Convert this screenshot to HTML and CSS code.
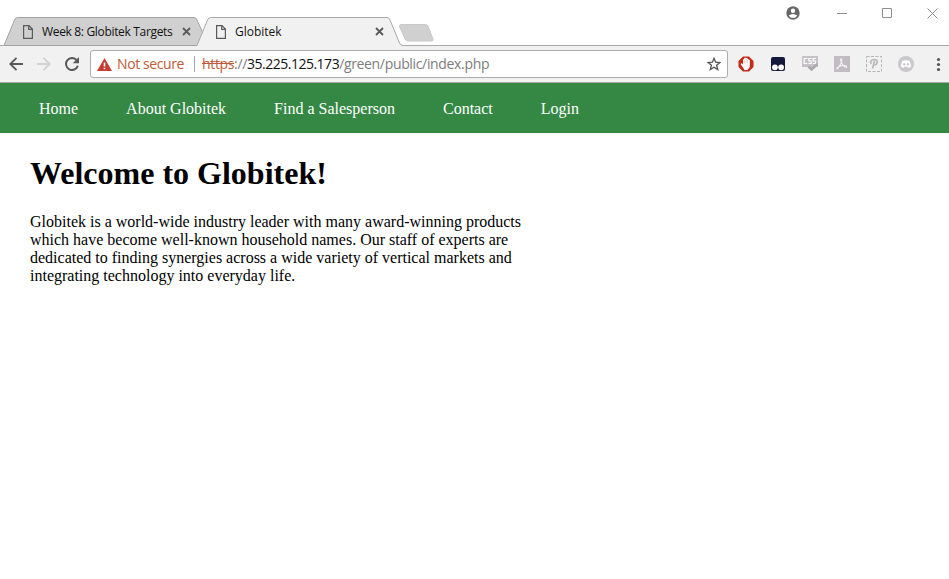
FILE: index.html
```
<!DOCTYPE html>
<html lang="en">
<head>
<meta charset="utf-8">
<title>Globitek</title>
<link rel="stylesheet" href="styles.css">
</head>
<body>
<div class="browser">
  <header class="tabstrip">
    <div class="tab tab-back">
      <svg class="tab-shape" width="200" height="29" viewBox="0 0 200 29"><path d="M0 28.5L1 26L10.500 3Q11.500 .5 13.500 .5H190Q192 .5 193 3L199 16L194 28.5Z" fill="#d0d0d0" stroke="#a3a3a3"/></svg>
      <svg class="page-icon" width="10" height="14" viewBox="0 0 10 14"><path d="M.6.6H6L9.4 4V13.4H.6ZM5.7.6V4.4H9.4" fill="none" stroke="#5a5a5a" stroke-width="1.2"/></svg>
      <span class="tab-title week">Week 8: Globitek Targets</span>
      <svg class="tab-close" width="9" height="9" viewBox="0 0 9 9"><path d="M1 1L8 8M8 1L1 8" stroke="#5a5a5a" stroke-width="1.8"/></svg>
    </div>
    <div class="tab tab-front">
      <svg class="tab-shape" width="206" height="30" viewBox="0 0 206 30"><path d="M0 30V28.5L1 26L10.500 3Q11.500 .5 13.500 .5H190Q192 .5 193 3L202.500 26Q203.500 28.5 206 28.5V30Z" fill="#f1f1f1"/><path d="M0 28.5L1 26L10.500 3Q11.500 .5 13.500 .5H190Q192 .5 193 3L202.500 26Q203.500 28.5 206 28.5" fill="none" stroke="#a8a8a8"/></svg>
      <svg class="page-icon" width="10" height="14" viewBox="0 0 10 14"><path d="M.6.6H6L9.4 4V13.4H.6ZM5.7.6V4.4H9.4" fill="none" stroke="#5a5a5a" stroke-width="1.2"/></svg>
      <span class="tab-title">Globitek</span>
      <svg class="tab-close" width="9" height="9" viewBox="0 0 9 9"><path d="M1 1L8 8M8 1L1 8" stroke="#5a5a5a" stroke-width="1.8"/></svg>
    </div>
    <svg class="new-tab" width="35" height="18" viewBox="0 0 35 18"><path d="M2 .5H26Q28 .5 29 2L34 15Q34.5 17 32.500 17H9Q7 17 6 15L.7 3Q0 .5 2 .5Z" fill="#d0d0d0" stroke="#cacaca"/></svg>
    <div class="window-controls">
      <svg width="14" height="14" viewBox="0 0 14 14"><circle cx="7" cy="7" r="6.700" fill="#666"/><circle cx="7" cy="4.700" r="2.200" fill="#fff"/><path d="M2.700 9.500Q7 6.500 11.300 9.500Q9.800 12 7 12T2.700 9.500Z" fill="#fff"/></svg>
      <svg width="10" height="11" viewBox="0 0 10 11"><path d="M0 5.500H10" stroke="#8e8e8e"/></svg>
      <svg width="10" height="10" viewBox="0 0 10 10"><path d="M.5.5H9.500V9.500H.5Z" fill="none" stroke="#8e8e8e"/></svg>
      <svg width="11" height="11" viewBox="0 0 11 11"><path d="M.5.5L10.500 10.500M10.500.5L.5 10.500" stroke="#8e8e8e"/></svg>
    </div>
  </header>
  <div class="toolbar">
    <div class="history">
      <svg width="14" height="14" viewBox="0 0 14 14"><path d="M14 7H1.500M7.500 .8L1.300 7L7.500 13.200" fill="none" stroke="#5a5a5a" stroke-width="1.900"/></svg>
      <svg width="14" height="14" viewBox="0 0 14 14"><path d="M0 7H12.500M6.500 .8L12.700 7L6.500 13.200" fill="none" stroke="#d2d2d2" stroke-width="1.900"/></svg>
      <svg width="14" height="14" viewBox="0 0 14 14"><path d="M11.700 3.200A6 6 0 1 0 12.800 8.700" fill="none" stroke="#5a5a5a" stroke-width="2"/><path d="M14 0V6.200H7.800Z" fill="#5a5a5a"/></svg>
    </div>
    <div class="omnibox">
      <svg class="warning" width="15" height="13" viewBox="0 0 15 13"><path d="M7.500 0L15 13H0Z" fill="#c53a31"/><path d="M6.700 4.500H8.300V8.500H6.700ZM6.700 9.700H8.300V11.300H6.700Z" fill="#fff"/></svg>
      <span class="security">Not secure</span>
      <span class="divider"></span>
      <span class="url"><s>https</s><i>://</i><b>35.225.125.173</b>/green/public/index.php</span>
      <svg class="star" width="14" height="14" viewBox="0 0 14 14"><path d="M7 1.300L8.600 5.200L12.900 5.500L9.600 8.200L10.700 12.500L7 10.200L3.300 12.500L4.400 8.200L1.100 5.500L5.400 5.200Z" fill="none" stroke="#555" stroke-width="1.300"/></svg>
    </div>
    <div class="extensions">
      <svg width="16" height="16" viewBox="0 0 16 16"><path d="M5 .5H11L15.500 5V11L11 15.500H5L.5 11V5Z" fill="#c22b1a"/><path d="M5 11.500L2.500 8L3.800 7.200L5 8.500V3.500L6.200 3.200V2L7.600 1.800L9 2L10.300 3.200L11.800 4V11L9.500 14H6.500Z" fill="#fff"/><path d="M6.500 4V7M8 3V7M9.500 4V7" stroke="#e6a8a0" stroke-width=".5"/></svg>
      <svg width="16" height="16" viewBox="0 0 16 16"><rect x="1" y="1" width="14" height="14" rx="2" fill="#14183a"/><circle cx="4.900" cy="11.300" r="2.900" fill="#fff"/><circle cx="11.100" cy="11.300" r="2.900" fill="#fff"/></svg>
      <svg width="16" height="16" viewBox="0 0 16 16"><path d="M0 0H16V11H12L10 14L7 11H0Z" fill="#c5c1c6"/><path d="M5.300 2.500H2.200V7.500H5.300M9.700 2.500H6.900V5H9.200V7.500H6.400M14 2.500H11.200V5H13.500V7.500H10.700" fill="none" stroke="#fff" stroke-width="1.200"/><path d="M6.500 10.500L9.500 13.500L15.500 8" fill="none" stroke="#aaa" stroke-width="2.500"/></svg>
      <svg width="16" height="16" viewBox="0 0 16 16"><path d="M0 0H16V16H0Z" fill="#c1bcc3"/><path d="M7.200 2.800C9 3 7.500 8.500 3.300 12.800C2 12.500 4 10.500 7.500 9.700S13 10 12.500 11.200S9 10 7.500 6.800S6.500 2.800 7.200 2.800" fill="none" stroke="#f1f1f1" stroke-width="1.100"/></svg>
      <svg width="16" height="16" viewBox="0 0 16 16"><path d="M.5.5H15.500V15.500H.5Z" fill="none" stroke="#b5b5b5" stroke-dasharray="3 1.500"/><path d="M5 8Q3.500 4 8 3.500Q12 3.500 11 7Q9.500 10 7.500 8M8.500 5L6.500 12.500" fill="none" stroke="#b8b8b8" stroke-width="1.700"/></svg>
      <svg width="16" height="16" viewBox="0 0 16 16"><circle cx="8" cy="8" r="8" fill="#c9c7cb"/><path d="M4.300 4.800Q8 3.800 11.700 4.800L13.300 10.500L10.500 12L9.500 10.800H6.500L5.500 12L2.700 10.500Z" fill="#fff"/><circle cx="6.200" cy="8.300" r="1.100" fill="#bbb"/><circle cx="9.800" cy="8.300" r="1.100" fill="#bbb"/></svg>
      <svg width="16" height="16" viewBox="0 0 16 16"><g fill="#555"><circle cx="8.500" cy="3.500" r="1.600"/><circle cx="8.500" cy="8.500" r="1.600"/><circle cx="8.500" cy="13.500" r="1.600"/></g></svg>
    </div>
  </div>
</div>
<nav class="site-nav">
  <a>Home</a><a>About Globitek</a><a>Find a Salesperson</a><a>Contact</a><a>Login</a>
</nav>
<main class="content">
  <h1>Welcome to Globitek!</h1>
  <p>Globitek is a world-wide industry leader with many award-winning products<br>which have become well-known household names. Our staff of experts are<br>dedicated to finding synergies across a wide variety of vertical markets and<br>integrating technology into everyday life.</p>
</main>
</body>
</html>
```
FILE: styles.css
```
* { box-sizing: border-box; }
body { margin: 0; height: 579px; overflow: hidden; background: #fff; color: #000; font-family: "Liberation Serif", serif; }
svg { display: block; flex: none; }
.browser { font-family: "Open Sans", sans-serif; }
.tabstrip { display: flex; height: 46px; padding: 17px 0 0 4px; border-bottom: 1px solid #a8a8a8; }
.tab { position: relative; display: flex; align-items: center; height: 29px; flex: none; padding-left: 19px; font-size: 12px; white-space: nowrap; }
.tab-back { width: 193px; }
.tab-front { width: 203px; z-index: 1; }
.tab-shape { position: absolute; left: 0; top: 0; }
.page-icon, .tab-title, .tab-close { position: relative; }
.tab-title { width: 140px; margin-left: 9px; color: #111; }
.week { letter-spacing: -.33px; }
.new-tab { margin: 7px 0 0 -1px; }
.window-controls { display: flex; align-items: center; height: 14px; margin: -11px 11px 0 auto; }
.window-controls svg + svg { margin-left: 35px; }
.window-controls svg:nth-child(2) { margin-left: 37px; }
.toolbar { display: flex; align-items: center; height: 37px; padding: 0 2px 0 9px; background: #f1f1f1; border-bottom: 1px solid #a9a9a9; }
.history { display: flex; gap: 14px; width: 81px; flex: none; }
.omnibox { display: flex; align-items: center; width: 638px; height: 28px; flex: none; padding: 0 6px; background: #fff; border: 1px solid #adadad; border-radius: 3px; font-size: 14px; white-space: nowrap; }
.security, .url { padding-bottom: 2px; }
.security { width: 67px; margin-left: 5px; color: #c05a38; letter-spacing: -.4px; }
.divider { width: 1px; height: 16px; margin: 0 7px 0 10px; background: #a9a9a9; }
.url { color: #7d7d7d; letter-spacing: -.34px; }
.url b { color: #111; font-weight: 400; letter-spacing: -.5px; }
.url i { color: #7d7d7d; font-style: normal; }
.url s { color: #c05a38; }
.star { margin-left: auto; }
.extensions { display: flex; gap: 16px; margin-left: 10px; }
.site-nav { display: flex; align-items: center; gap: 48px; height: 50px; padding: 2px 0 0 39px; background: #358844; color: #fff; font-size: 16px; line-height: 18px; }
.content { padding: 22px 30px; }
h1 { margin: 0 0 22px; font-size: 32px; line-height: 36px; }
p { margin: 0; font-size: 16px; line-height: 18px; }
```
